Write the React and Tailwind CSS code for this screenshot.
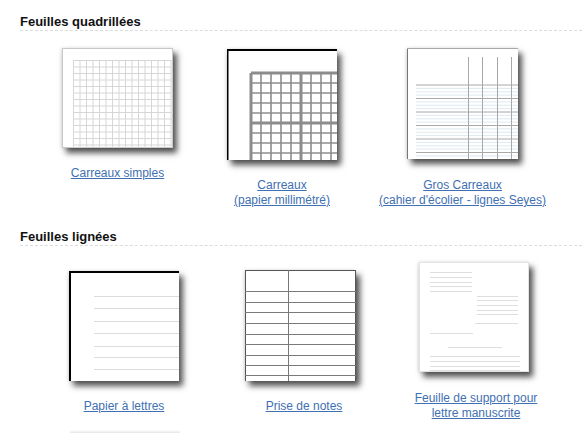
import React from "react";

const lineGrey = "#d6d6d6";

function Paper({ w, h, className = "", children }) {
    return (
        <div
            className={`bg-white shadow-[4px_5px_6px_rgba(0,0,0,0.68),_-1px_0_3px_rgba(0,0,0,0.12)] ${className}`}
            style={{ width: w, height: h }}
        >
            <svg width={w} height={h} className="block">
                {children}
            </svg>
        </div>
    );
}

function SimpleGrid() {
    const xs = [];
    for (let x = 11; x <= 111; x += 6.5) xs.push(x);
    const ys = [];
    for (let y = 12; y <= 100; y += 6.5) ys.push(y);
    return (
        <Paper w={111} h={100}>
            <rect x="0.5" y="0.5" width="110" height="99" fill="none" stroke="#c8c8c8" />
            {xs.map((x) => (
                <line key={"x" + x} x1={x + 0.5} y1={12} x2={x + 0.5} y2={100} stroke={lineGrey} />
            ))}
            {ys.map((y) => (
                <line key={"y" + y} x1={11} y1={y + 0.5} x2={111} y2={y + 0.5} stroke={lineGrey} />
            ))}
        </Paper>
    );
}

function Millimetre() {
    const steps = [24, 34, 44, 54, 64, 74, 84, 94, 104];
    return (
        <Paper w={110} h={111}>
            <line x1="0" y1="1" x2="110" y2="1" stroke="#000" strokeWidth="2" />
            <line x1="0.75" y1="0" x2="0.75" y2="111" stroke="#000" strokeWidth="1.5" />
            {steps.map((s) => {
                const major = s === 24 || s === 74;
                return (
                    <g key={s} stroke="#8c8c8c" strokeWidth={major ? 3 : 1.6}>
                        <line x1={s} y1={24} x2={s} y2={111} />
                        <line x1={24} y1={s} x2={110} y2={s} />
                    </g>
                );
            })}
        </Paper>
    );
}

function Seyes() {
    const dark = [37, 50.5, 64, 77.5, 91, 104.5];
    const light = [];
    dark.forEach((y) => {
        [3.4, 6.8, 10.1].forEach((d) => {
            if (y + d < 111) light.push(y + d);
        });
    });
    return (
        <Paper w={111} h={111}>
            <line x1="0.5" y1="0" x2="0.5" y2="111" stroke="#777" />
            <line x1="0" y1="0.5" x2="111" y2="0.5" stroke="#aaa" />
            {light.map((y) => (
                <line key={"l" + y} x1={9} y1={y} x2={111} y2={y} stroke="#d3e4ec" strokeWidth="0.8" />
            ))}
            {dark.map((y) => (
                <line key={"d" + y} x1={9} y1={y} x2={111} y2={y} stroke="#a8a8a8" />
            ))}
            {[61.5, 75.5, 90.5, 104.5].map((x) => (
                <line key={x} x1={x} y1={9} x2={x} y2={111} stroke="#a8a8a8" />
            ))}
        </Paper>
    );
}

function Lettres() {
    return (
        <Paper w={110} h={110}>
            <line x1="0" y1="1" x2="110" y2="1" stroke="#000" strokeWidth="2" />
            <line x1="1" y1="0" x2="1" y2="110" stroke="#000" strokeWidth="2" />
            {[25, 37, 50, 62, 75, 86, 98].map((y) => (
                <line key={y} x1={25} y1={y + 0.5} x2={110} y2={y + 0.5} stroke="#dcdcdc" />
            ))}
        </Paper>
    );
}

function Notes() {
    return (
        <Paper w={111} h={111}>
            <rect x="0.5" y="0.5" width="110" height="112" fill="none" stroke="#555" />
            <line x1="43.5" y1="0" x2="43.5" y2="111" stroke="#777" />
            {[21, 32, 42, 53, 64, 74, 85, 95, 105].map((y) => (
                <line key={y} x1={0} y1={y + 0.5} x2={111} y2={y + 0.5} stroke="#7a7a7a" />
            ))}
        </Paper>
    );
}

function Manuscrite() {
    const segs = [
        ...[10, 15, 20, 24, 29].map((y) => [11, 53, y]),
        ...[34, 38, 43, 48, 52].map((y) => [58, 99, y]),
        [56, 99, 61],
        [11, 54, 71],
        [29, 83, 85],
        ...[94, 99, 104, 108].map((y) => [11, 101, y]),
    ];
    return (
        <Paper w={110} h={110}>
            <rect x="0.5" y="0.5" width="109" height="109" fill="none" stroke="#e4e4e4" />
            {segs.map(([a, b, y], i) => (
                <line key={i} x1={a} y1={y + 0.5} x2={b} y2={y + 0.5} stroke="#dedede" />
            ))}
        </Paper>
    );
}

function Label({ lines, className = "" }) {
    return (
        <a href="#" className={`text-[12px] leading-[15px] text-[#3f70b2] underline text-center ${className}`}>
            {lines.map((l, i) => (
                <span key={i} className="block">{l}</span>
            ))}
        </a>
    );
}

function Heading({ children, className = "" }) {
    return (
        <h2 className={`text-[13px] leading-[16px] font-bold text-[#111] border-b border-dashed border-[#dcdcdc] ${className}`}>
            {children}
        </h2>
    );
}

export default function App() {
    return (
        <div className="w-[582px] h-[435px] overflow-hidden bg-white pl-5 pt-[14px]" style={{ fontFamily: "'Liberation Sans', Arial, sans-serif" }}>
            <Heading>Feuilles quadrillées</Heading>

            <div className="grid grid-cols-[195px_134px_227px] mt-[17px]">
                <div className="flex flex-col items-center">
                    <SimpleGrid />
                    <Label lines={["Carreaux simples"]} className="mt-[18px]" />
                </div>
                <div className="flex flex-col items-center mt-px">
                    <Millimetre />
                    <Label lines={["Carreaux", "(papier millimétré)"]} className="mt-[18px]" />
                </div>
                <div className="flex flex-col items-center">
                    <Seyes />
                    <Label lines={["Gros Carreaux", "(cahier d'écolier - lignes Seyes)"]} className="mt-[19px]" />
                </div>
            </div>

            <Heading className="mt-[21px]">Feuilles lignées</Heading>

            <div className="grid grid-cols-[208px_144px_204px] mt-[16px]">
                <div className="flex flex-col items-center mt-[9px]">
                    <Lettres />
                    <Label lines={["Papier à lettres"]} className="mt-[18px]" />
                </div>
                <div className="flex flex-col items-center mt-[8px]">
                    <Notes />
                    <Label lines={["Prise de notes"]} className="mt-[18px] ml-2" />
                </div>
                <div className="flex flex-col items-center">
                    <Manuscrite />
                    <Label lines={["Feuille de support pour", "lettre manuscrite"]} className="mt-[19px] ml-1" />
                </div>
            </div>

            <div className="ml-[50px] mt-[9px] w-[110px] h-[3px] bg-gradient-to-b from-transparent to-[#e6e6e6]" />
        </div>
    );
}
